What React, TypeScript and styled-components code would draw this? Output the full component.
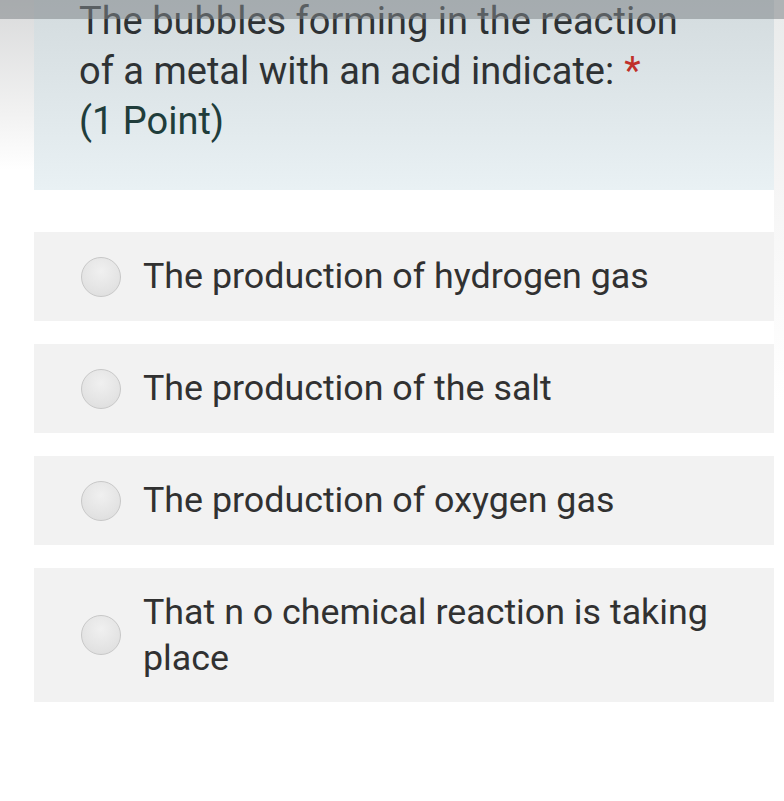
import styled, { createGlobalStyle } from "styled-components"

const GlobalStyle = createGlobalStyle`
	html, body {
		margin: 0;
		padding: 0;
		background: #ffffff;
	}
	body {
		font-family: Roboto, "Liberation Sans", sans-serif;
	}
`

const Page = styled.div`
	position: relative;
	width: 784px;
	height: 801px;
	overflow: hidden;
	display: grid;
	grid-template-columns: 34px 740px 10px;
	background: #ffffff;
`

const LeftShade = styled.div`
	background: linear-gradient(180deg, #d9dadb 0px, #f1f1f1 110px, #ffffff 170px);
`

const RightShade = styled.div`
	background: linear-gradient(180deg, #e9ebeb 0px, #f6f6f6 200px, #ffffff 400px);
`

const TopBar = styled.div`
	position: absolute;
	top: 0;
	left: 0;
	right: 0;
	height: 19px;
	background: rgba(128, 133, 136, 0.55);
`

const Form = styled.div`
	display: flex;
	flex-direction: column;
`

const QuestionCard = styled.div`
	height: 190px;
	box-sizing: border-box;
	padding: 0 20px 0 45px;
	background: linear-gradient(180deg, #d3dbde 0%, #e9f1f4 100%);
`

const QuestionText = styled.div`
	margin-top: -4px;
	font-size: 38px;
	line-height: 50px;
	color: #2e3234;
`

const Star = styled.span`
	color: #c0302a;
	margin-left: 10px;
`

const Points = styled.div`
	color: #203d3b;
`

const Options = styled.div`
	margin-top: 42px;
	display: flex;
	flex-direction: column;
	gap: 23px;
`

const Option = styled.label<{ $tall?: boolean }>`
	display: flex;
	align-items: center;
	gap: 22px;
	box-sizing: border-box;
	height: ${(p) => (p.$tall ? 134 : 89)}px;
	padding: 0 30px 0 47px;
	background: #f2f2f2;
`

const Radio = styled.span`
	flex: none;
	width: 40px;
	height: 40px;
	box-sizing: border-box;
	border-radius: 50%;
	border: 1.5px solid #c8c8c8;
	background: radial-gradient(circle at 50% 35%, #f0f0f0 0%, #e4e4e4 60%, #dbdbdb 100%);
`

const OptionText = styled.span`
	font-size: 35.8px;
	line-height: 46px;
	color: #313131;
	margin-top: -1px;
`

const options = [
	"The production of hydrogen gas",
	"The production of the salt",
	"The production of oxygen gas",
]

export default function App() {
	return (
		<>
			<GlobalStyle />
			<Page>
				<LeftShade />
				<Form>
					<QuestionCard>
						<QuestionText>
							The bubbles forming in the reaction
							<br />
							of a metal with an acid indicate:<Star>*</Star>
							<Points>(1 Point)</Points>
						</QuestionText>
					</QuestionCard>
					<Options>
						{options.map((o) => (
							<Option key={o}>
								<Radio />
								<OptionText>{o}</OptionText>
							</Option>
						))}
						<Option $tall>
							<Radio />
							<OptionText>
								That n o chemical reaction is taking
								<br />
								place
							</OptionText>
						</Option>
					</Options>
				</Form>
				<RightShade />
				<TopBar />
			</Page>
		</>
	)
}
